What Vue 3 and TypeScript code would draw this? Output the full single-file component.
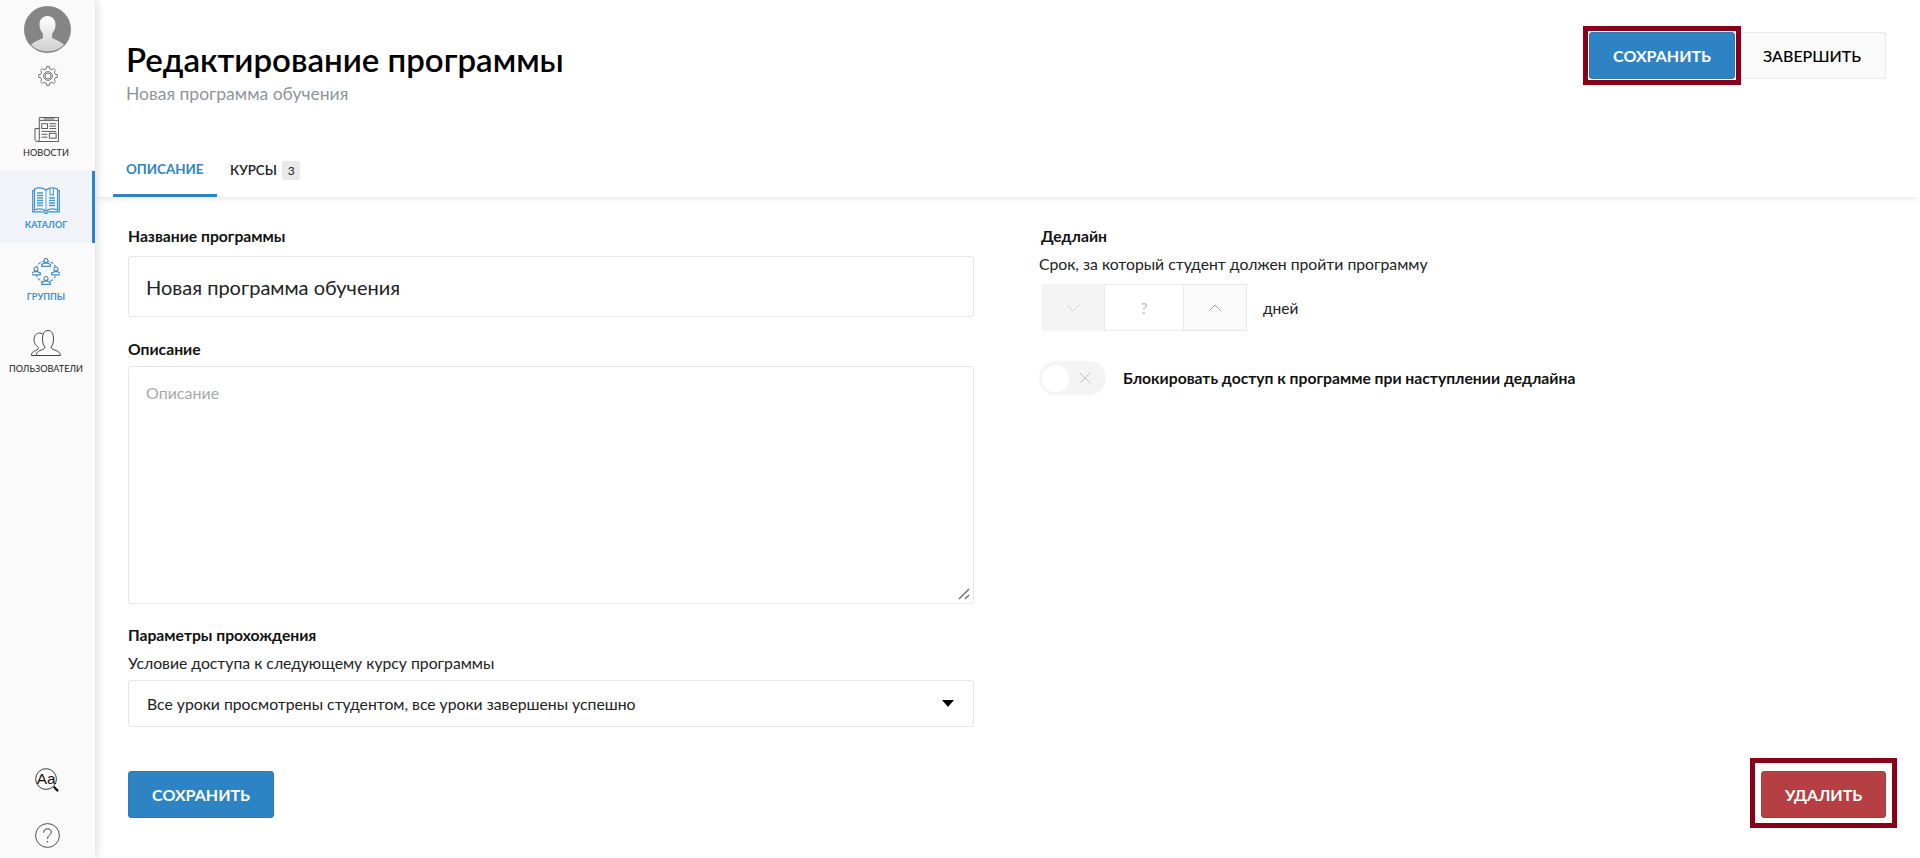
<script setup lang="ts">
const topItems = [
  { key: 'news', label: 'НОВОСТИ', cls: '' },
  { key: 'catalog', label: 'КАТАЛОГ', cls: 'active' },
  { key: 'groups', label: 'ГРУППЫ', cls: 'blue' },
  { key: 'users', label: 'ПОЛЬЗОВАТЕЛИ', cls: '' },
]

// positions of the four people around the ring of the "groups" icon
const people = [
  { x: 14, y: 2.5 },
  { x: 4, y: 11 },
  { x: 24, y: 11 },
  { x: 14, y: 20.5 },
]

// scalloped gear outline: eight rounded lobes around the centre
function gearPath(): string {
  const lobes = 8
  const outer = 9.4
  const inner = 7.4
  const pts: string[] = []
  for (let i = 0; i < lobes; i++) {
    const a0 = ((i - 0.28) / lobes) * Math.PI * 2
    const a1 = ((i + 0.28) / lobes) * Math.PI * 2
    const a2 = ((i + 0.72) / lobes) * Math.PI * 2
    const p = (r: number, a: number) =>
      `${(10 + r * Math.cos(a)).toFixed(2)} ${(10 + r * Math.sin(a)).toFixed(2)}`
    pts.push(`${i === 0 ? 'M' : 'L'}${p(inner, a0)}`)
    pts.push(`Q${p(outer + 1, a0)} ${p(outer, (a0 + a1) / 2)}`)
    pts.push(`Q${p(outer + 1, a1)} ${p(inner, a1)}`)
    pts.push(`L${p(inner, a2)}`)
  }
  return pts.join(' ') + ' Z'
}
const gear = gearPath()
</script>

<template>
  <div class="page">
    <aside class="sidebar">
      <div class="avatar">
        <svg viewBox="0 0 47 47" width="47" height="47">
          <defs>
            <linearGradient id="shoulder" x1="0" y1="0" x2="0" y2="1">
              <stop offset="0" stop-color="#ffffff" />
              <stop offset="1" stop-color="#cfcfcf" />
            </linearGradient>
          </defs>
          <circle cx="23.5" cy="23.5" r="23.5" fill="#858585" />
          <path d="M23.500 10c-5 0-8 3.600-8 8.500 0 3.800 1.500 7 3.400 9.200v4.300c-3 1.800-8.400 3-11.900 6.800a23.500 23.500 0 0 0 33 0c-3.500-3.800-8.900-5-11.900-6.800v-4.300c1.900-2.200 3.400-5.400 3.400-9.200 0-4.900-3-8.500-8-8.500z" fill="url(#shoulder)" />
        </svg>
      </div>
      <svg class="gear" viewBox="0 0 20 20" width="20" height="20" fill="none" stroke="#555" stroke-width="0.8">
        <path :d="gear" />
        <circle cx="10" cy="10" r="4.400" />
        <circle cx="10" cy="10" r="3" />
      </svg>

      <nav class="nav">
        <a v-for="item in topItems" :key="item.key" class="nav-item" :class="item.cls">
          <svg v-if="item.key === 'news'" class="i-news" viewBox="0 0 26 28" width="25" height="27" fill="none" stroke="#555" stroke-width="1">
            <path d="M5.500 1.500h20v25H3.500a2.500 2.500 0 0 1-2.500-2.500V13h4.500" />
            <path d="M5.500 1.500v23a2 2 0 0 1-2 2" />
            <path d="M5.500 4.500h20M10 3h11" />
            <rect x="8" y="8" width="6" height="5" />
            <path d="M16 8h7M16 10.500h7M16 13h7M8 16h15M8 19h6M8 22h6" />
            <rect x="16" y="18" width="7" height="5" />
          </svg>
          <svg v-else-if="item.key === 'catalog'" class="i-catalog" viewBox="0 0 28 28" width="28" height="28" fill="none" stroke="#3f8fce" stroke-width="1.200">
            <path d="M2.500 3.500H.7v21.300h11.500l1 1.500h1.600l1-1.500h11.500V3.500h-1.800" />
            <path d="M2.500 2c3.500-1.500 8-1.500 11.500 1 3.500-2.500 8-2.500 11.500-1v21c-3.500-1.500-8-1.500-11.500 1-3.500-2.500-8-2.500-11.500-1z" fill="#f8fbfd" />
            <path d="M14 3v21" stroke-width="0.900" />
            <path d="M5 6h6M5 8.500h6M5 11h6M5 13.500h6M5 16h6M5 18.500h6M17 11h6M17 13.500h6M17 16h6M17 18.500h6" stroke="#4a98d4" stroke-width="1.300" />
            <path d="M18 2v6.500l1.700-1.300 1.700 1.300V2" stroke-width="1" />
          </svg>
          <svg v-else-if="item.key === 'groups'" class="i-groups" viewBox="0 0 28 28" width="28" height="28" fill="none" stroke="#3f8fce" stroke-width="1.100">
            <circle cx="14" cy="13.500" r="10.500" stroke-dasharray="3 1.500" />
            <g v-for="(p, i) in people" :key="i" fill="#fafafa">
              <circle :cx="p.x" :cy="p.y" r="2" />
              <path :transform="`translate(${p.x} ${p.y})`" d="M-4.300 5.800v-1.800l2.800-1.300h3l2.800 1.300v1.800z" stroke-width="1.200" />
            </g>
          </svg>
          <svg v-else class="i-users" viewBox="0 0 30 26" width="30" height="26" fill="none" stroke="#444" stroke-width="1">
            <path d="M5.500 25.500H.5c0-3 1.500-4 3-4.500s4-1.500 4-3.500c-1.500-1.500-4.500-3-4.500-8C3 5.500 5.500 3 8.500 3c1 0 2 .3 3 1" />
            <path d="M5.500 25.500c0-3 1-4 3.500-5 2.500-1 5-1.500 5-3.500-1.500-1.500-2.500-4-2.500-8C11.500 3.500 13.500 .5 17 .5s5.500 3 5.500 8.500c0 4-1 6.500-2.500 8 0 2 2.500 2.500 5 3.500s4 2 4.500 5z" />
          </svg>
          <span class="nav-label">{{ item.label }}</span>
        </a>
      </nav>

      <div class="side-bottom">
        <svg viewBox="0 0 26 26" width="25" height="25" fill="none" stroke="#222">
          <circle cx="11.500" cy="11.500" r="10.800" stroke-width="0.9" />
          <path d="M19.500 19.500l4.500 4.500" stroke="#111" stroke-width="2.400" />
          <text x="1.800" y="17" class="aa">Aa</text>
        </svg>
        <svg viewBox="0 0 26 26" width="25" height="25" fill="none" stroke="#333">
          <circle cx="13" cy="13" r="12.400" stroke-width="0.9" />
          <path d="M9 10c0-2.500 1.800-4 4-4s4 1.500 4 3.500c0 3-4 3-4 7" stroke-width="1" />
          <circle cx="13" cy="19.500" r="0.800" fill="#333" stroke="none" />
        </svg>
      </div>
    </aside>

    <main class="main">
      <header class="header">
        <div class="titles">
          <h1>Редактирование программы</h1>
          <div class="subtitle">Новая программа обучения</div>
        </div>
        <div class="actions">
          <button class="btn primary marked">СОХРАНИТЬ</button>
          <button class="btn light">ЗАВЕРШИТЬ</button>
        </div>
      </header>

      <div class="tabs">
        <div class="tab current">ОПИСАНИЕ</div>
        <div class="tab">КУРСЫ <span class="count">3</span></div>
      </div>

      <section class="form">
        <div class="col left">
          <label class="label first">Название программы</label>
          <div class="input big">Новая программа обучения</div>
          <label class="label desc">Описание</label>
          <div class="textarea">
            <span class="placeholder">Описание</span>
            <svg class="grip" viewBox="0 0 12 12" width="12" height="12" stroke="#666" stroke-width="1.300">
              <path d="M1 11L11 1M7 11l4-4" />
            </svg>
          </div>
          <label class="label params">Параметры прохождения</label>
          <div class="hint large">Условие доступа к следующему курсу программы</div>
          <div class="select">
            <span>Все уроки просмотрены студентом, все уроки завершены успешно</span>
            <i class="caret"></i>
          </div>
        </div>
        <div class="col right">
          <label class="label first dl">Дедлайн</label>
          <div class="hint deadline">Срок, за который студент должен пройти программу</div>
          <div class="stepper-row">
            <div class="stepper">
              <div class="step down">
                <svg viewBox="0 0 14 8" width="14" height="8" fill="none" stroke="#d4d4d4"><path d="M1 1l6 6 6-6" /></svg>
              </div>
              <div class="step value">?</div>
              <div class="step up">
                <svg viewBox="0 0 14 8" width="14" height="8" fill="none" stroke="#a0a0a0"><path d="M1 7l6-6 6 6" /></svg>
              </div>
            </div>
            <span class="days">дней</span>
          </div>
          <div class="toggle-row">
            <div class="toggle">
              <span class="knob"></span>
              <svg viewBox="0 0 12 12" width="12" height="12" stroke="#c4c4c4"><path d="M.5 .5l11 11M11.500 .5l-11 11" /></svg>
            </div>
            <span class="toggle-label">Блокировать доступ к программе при наступлении дедлайна</span>
          </div>
        </div>
      </section>

      <footer class="footer">
        <button class="btn primary">СОХРАНИТЬ</button>
        <button class="btn danger marked-far">УДАЛИТЬ</button>
      </footer>
    </main>
  </div>
</template>

<style>
html, body { margin: 0; background: #fff; }
</style>

<style scoped>
.page {
  display: flex;
  width: 1920px;
  height: 858px;
  overflow: hidden;
  font-family: Lato, "Noto Sans", sans-serif;
  color: #000;
  background: #fff;
}
.sidebar {
  width: 95px;
  flex: none;
  height: 858px;
  background: #fafafa;
  box-shadow: 2px 0 8px rgba(0, 0, 0, 0.14);
  display: flex;
  flex-direction: column;
  align-items: center;
  position: relative;
  z-index: 2;
}
.avatar { margin-top: 6px; height: 47px; }
.gear { margin-top: 13px; }
.nav { margin-top: 13px; width: 100%; display: flex; flex-direction: column; }
.nav-item {
  height: 72px;
  display: flex;
  flex-direction: column;
  align-items: center;
  justify-content: flex-end;
  box-sizing: border-box;
  padding: 0 3px 12px 0;
  color: #222;
  width: 100%;
}
.i-news { margin-bottom: 4px; }
.i-catalog { margin-bottom: 4px; }
.i-groups { margin-bottom: 5px; }
.i-users { margin-bottom: 7px; }
.nav-label { font-size: 9.100px; line-height: 12px; white-space: nowrap; }
.nav-item.active {
  background: #f0f4f8;
  border-right: 3px solid #2e83c5;
  padding-right: 0;
  color: #3f8fce;
  font-weight: 700;
}
.nav-item.blue { color: #3f8fce; font-weight: 700; }
.side-bottom {
  margin-top: auto;
  padding-bottom: 10px;
  display: flex;
  flex-direction: column;
  align-items: center;
  gap: 30px;
}
.aa { font-family: "Liberation Sans", sans-serif; font-size: 16px; fill: #111; stroke: none; }

.main { flex: 1; min-width: 0; display: flex; flex-direction: column; }
.header {
  display: flex;
  justify-content: space-between;
  padding: 32px 34px 0 31px;
  height: 121px;
  box-sizing: border-box;
}
h1 { margin: 8px 0 0; font-size: 33px; line-height: 38px; font-weight: 600; color: #000; }
.subtitle { font-size: 17.500px; line-height: 20px; color: #8f959b; margin-top: 6px; }
.actions { display: flex; align-items: flex-start; }
.btn {
  font-family: inherit;
  font-size: 16px;
  height: 47px;
  box-sizing: border-box;
  border-radius: 3px;
  padding: 0;
  cursor: pointer;
  font-weight: 700;
  position: relative;
}
.btn.primary { width: 146px; background: #2e83c5; border: 1px solid #2a7ab8; color: #fff; }
.btn.light { width: 151px; background: #fafafa; border: 1px solid #e8e8e8; color: #000; font-weight: 500; border-left: none; padding-left: 4px; }
.btn.danger { width: 125px; background: #b53f42; border: 1px solid #ad3a3d; color: #fff; }
.marked::after {
  content: "";
  position: absolute;
  top: -7px;
  right: -7px;
  bottom: -7px;
  left: -7px;
  border: 5px solid #8a0016;
  pointer-events: none;
}
.marked { z-index: 1; }
.marked-far::after {
  content: "";
  position: absolute;
  top: -14px;
  right: -12px;
  bottom: -11px;
  left: -12px;
  border: 5px solid #8a0016;
  pointer-events: none;
}

.tabs {
  display: flex;
  height: 76px;
  align-items: stretch;
  padding-left: 18px;
  box-shadow: 0 5px 6px -3px rgba(0, 0, 0, 0.1);
  position: relative;
  box-sizing: border-box;
}
.tab {
  font-size: 13.400px;
  font-weight: 600;
  padding: 40px 13px 0;
  color: #222;
  box-sizing: border-box;
}
.tab.current { color: #2e83c5; font-weight: 700; border-bottom: 3px solid #2e83c5; width: 104px; }
.count {
  display: inline-block;
  width: 18px;
  height: 19px;
  line-height: 20px;
  background: #e9e9e9;
  border-radius: 3px;
  font-size: 12px;
  font-weight: 400;
  text-align: center;
  margin-left: 2px;
}

.form { display: flex; padding: 0 33px; flex: none; }
.col { display: flex; flex-direction: column; }
.left { width: 846px; }
.right { margin-left: 65px; flex: 1; }
.label { font-size: 15.700px; font-weight: 700; line-height: 20px; color: #111; }
.label.first { margin-top: 29px; }
.label.desc { margin-top: 22px; }
.label.params { margin-top: 21px; }
.label.dl { margin-left: 2px; }
.input, .textarea, .select {
  box-sizing: border-box;
  border: 1px solid #e6e6e6;
  border-radius: 3px;
  background: #fff;
}
.input.big {
  height: 61px;
  margin-top: 10px;
  display: flex;
  align-items: center;
  padding-left: 17px;
  font-size: 20px;
  color: #222;
}
.textarea {
  height: 238px;
  margin-top: 7px;
  padding: 16px 17px;
  position: relative;
  font-size: 16px;
}
.placeholder { color: #a8a8a8; }
.grip { position: absolute; right: 3px; bottom: 3px; }
.hint { line-height: 20px; color: #222; font-size: 15.750px; }
.hint.large { margin-top: 8px; }
.hint.deadline { margin-top: 8px; }
.select {
  height: 47px;
  margin-top: 7px;
  display: flex;
  align-items: center;
  justify-content: space-between;
  padding: 0 19px 0 18px;
  font-size: 15.750px;
  color: #222;
}
.caret {
  width: 0;
  height: 0;
  border-left: 6px solid transparent;
  border-right: 6px solid transparent;
  border-top: 7px solid #000;
}
.stepper-row { display: flex; align-items: center; margin-top: 10px; margin-left: 2px; }
.stepper { display: flex; height: 47px; }
.step {
  box-sizing: border-box;
  display: flex;
  align-items: center;
  justify-content: center;
  height: 47px;
  border: 1px solid #e8e8e8;
}
.step.down { width: 63px; background: #f4f4f4; border-color: #f4f4f4; border-radius: 3px 0 0 3px; }
.step.value { width: 80px; background: #fff; color: #bbb; font-size: 15px; }
.step.up { width: 63px; background: #fafafa; border-left: none; }
.days { margin-left: 16px; font-size: 15.500px; color: #222; }
.toggle-row { display: flex; align-items: center; margin-top: 30px; }
.toggle {
  width: 67px;
  height: 34px;
  border-radius: 17px;
  background: #f4f4f4;
  display: flex;
  align-items: center;
  justify-content: space-between;
  padding: 0 15px 0 3px;
  box-sizing: border-box;
}
.knob { width: 27px; height: 27px; border-radius: 50%; background: #fff; }
.toggle-label { margin-left: 17px; font-size: 15.700px; font-weight: 700; color: #111; }
.footer {
  display: flex;
  justify-content: space-between;
  padding: 0 34px 0 33px;
  margin-top: 44px;
}
</style>
